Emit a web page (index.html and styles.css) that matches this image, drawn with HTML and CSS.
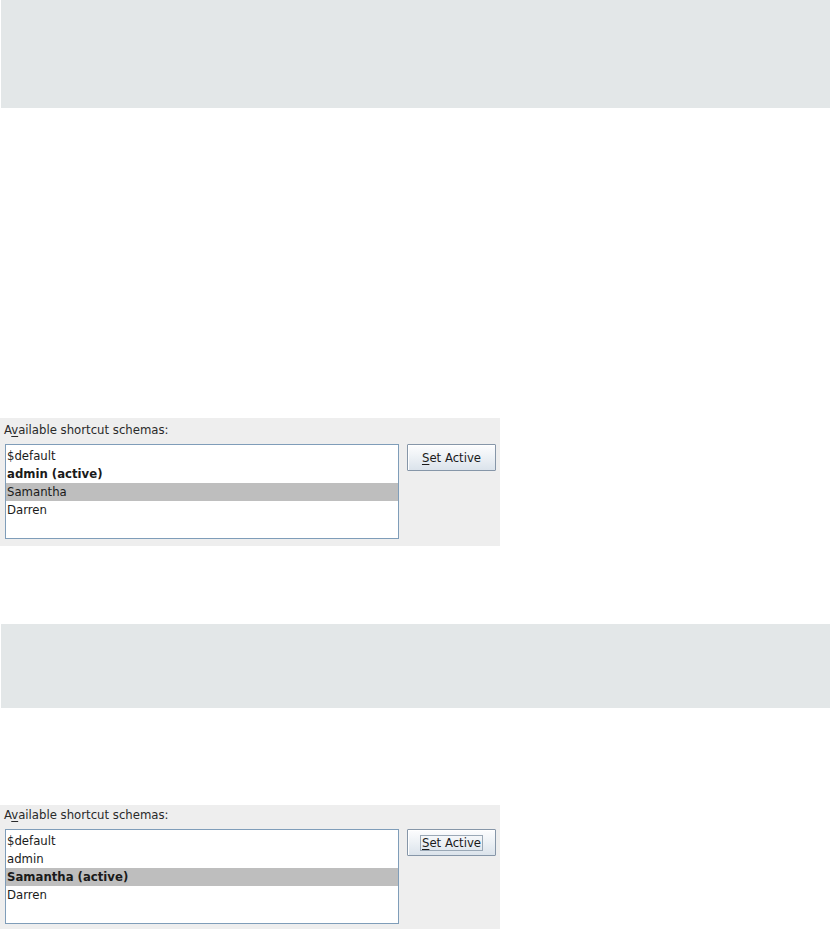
FILE: index.html
```html
<!DOCTYPE html>
<html lang="en">
<head>
<meta charset="utf-8">
<title>Shortcut schemas</title>
<link rel="stylesheet" href="styles.css">
</head>
<body>
<div class="band band--top"></div>

<section class="panel panel--first">
  <div class="panel-label">A<u>v</u>ailable shortcut schemas:</div>
  <div class="panel-body">
    <ul class="schema-list">
      <li class="schema-row">$default</li>
      <li class="schema-row schema-row--active">admin (active)</li>
      <li class="schema-row schema-row--selected">Samantha</li>
      <li class="schema-row">Darren</li>
    </ul>
    <button class="set-btn" type="button"><span class="set-btn-text"><u>S</u>et Active</span></button>
  </div>
</section>

<div class="band band--mid"></div>

<section class="panel panel--second">
  <div class="panel-label">A<u>v</u>ailable shortcut schemas:</div>
  <div class="panel-body">
    <ul class="schema-list">
      <li class="schema-row">$default</li>
      <li class="schema-row">admin</li>
      <li class="schema-row schema-row--selected schema-row--active">Samantha (active)</li>
      <li class="schema-row">Darren</li>
    </ul>
    <button class="set-btn set-btn--focused" type="button"><span class="set-btn-text"><u>S</u>et Active</span></button>
  </div>
</section>
</body>
</html>
```

FILE: styles.css
```css
html, body {
  margin: 0;
  padding: 0;
  background: #ffffff;
}

body {
  font-family: "DejaVu Sans Condensed", "DejaVu Sans", "Liberation Sans", sans-serif;
  font-size: 13px;
  color: #1a1a1a;
}

.band {
  margin-left: 1px;
  background: #e3e7e8;
}

.band--top {
  height: 108px;
}

.band--mid {
  height: 84px;
  margin-top: 78px;
}

.panel {
  width: 500px;
  background: #eeeeee;
  box-sizing: border-box;
}

.panel--first {
  margin-top: 310px;
  height: 128px;
  padding-top: 4px;
}

.panel--second {
  margin-top: 97px;
  height: 124px;
  padding-top: 2px;
}

.panel-label {
  line-height: 16px;
  height: 16px;
  padding-left: 4px;
  color: #2a2a2a;
}

.panel-label u,
.set-btn-text u {
  text-decoration-thickness: 1px;
  text-underline-offset: 2px;
}

.panel-body {
  display: flex;
  align-items: flex-start;
  margin-top: 6px;
  padding-left: 5px;
  gap: 8px;
}

.schema-list {
  list-style: none;
  margin: 0;
  padding: 2px 0 0 0;
  width: 394px;
  height: 95px;
  box-sizing: border-box;
  border: 1px solid #7f9db9;
  background: #ffffff;
}

.schema-row {
  height: 18px;
  line-height: 18px;
  padding-left: 1px;
  color: #1a1a1a;
  white-space: nowrap;
}

.schema-row--active {
  font-weight: bold;
}

.schema-row--selected {
  background: #bebebe;
}

.set-btn {
  width: 89px;
  height: 27px;
  margin: 0;
  padding: 0;
  box-sizing: border-box;
  border: 1px solid #8696a8;
  border-radius: 1px;
  background: linear-gradient(#fdfdfe 0%, #eef2f6 45%, #dbe3eb 100%);
  box-shadow: inset 1px 1px 0 #ffffff;
  font-family: inherit;
  font-size: 13px;
  color: #1a1a1a;
  display: flex;
  align-items: center;
  justify-content: center;
}

.set-btn-text {
  display: inline-block;
  line-height: 14px;
  padding: 0 1px;
  border: 1px solid transparent;
}

.set-btn--focused .set-btn-text {
  border-color: #9aa8b6;
}
```
